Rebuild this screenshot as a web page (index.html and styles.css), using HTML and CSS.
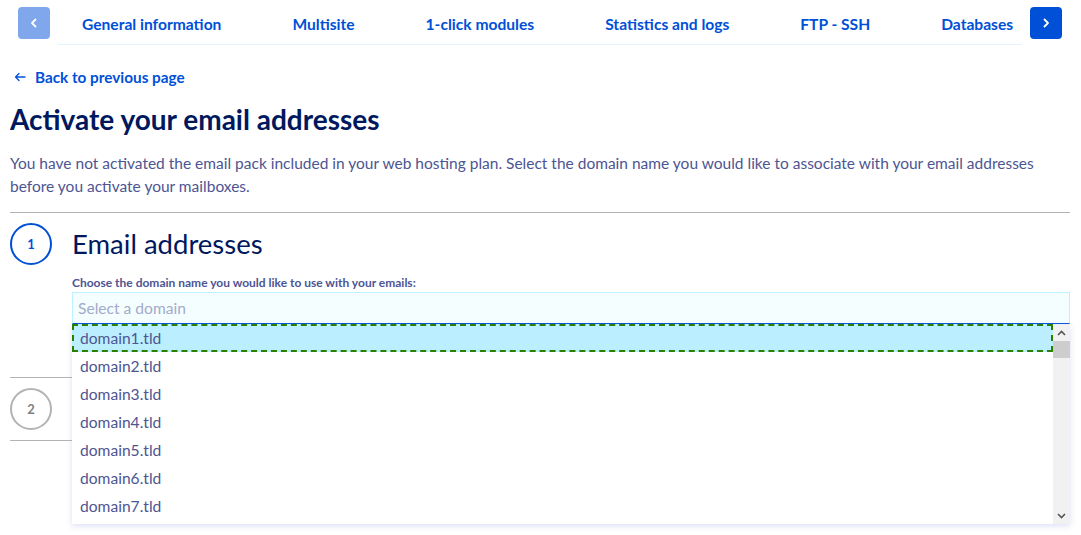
FILE: index.html
```html
<!DOCTYPE html>
<html lang="en">
<head>
<meta charset="utf-8">
<title>Activate your email addresses</title>
<link rel="stylesheet" href="styles.css">
</head>
<body>
<div class="tabs">
  <button class="nav-btn nav-btn--disabled" aria-label="Previous">
    <svg width="10" height="10" viewBox="0 0 10 10"><path d="M6.5 1.5 L3 5 L6.5 8.5" fill="none" stroke="#fff" stroke-width="1.8" stroke-linecap="round" stroke-linejoin="round"/></svg>
  </button>
  <nav class="tab-list">
    <a class="tab">General information</a>
    <a class="tab">Multisite</a>
    <a class="tab">1-click modules</a>
    <a class="tab">Statistics and logs</a>
    <a class="tab">FTP - SSH</a>
    <a class="tab">Databases</a>
  </nav>
  <button class="nav-btn" aria-label="Next">
    <svg width="10" height="10" viewBox="0 0 10 10"><path d="M3.5 1.5 L7 5 L3.5 8.5" fill="none" stroke="#fff" stroke-width="1.8" stroke-linecap="round" stroke-linejoin="round"/></svg>
  </button>
</div>

<main class="page">
  <a class="back-link">
    <svg class="back-arrow" width="12" height="10" viewBox="0 0 12 10"><path d="M11 5 H1.5 M5 1.5 L1.5 5 L5 8.5" fill="none" stroke="#0050d7" stroke-width="1.3" stroke-linecap="round" stroke-linejoin="round"/></svg>
    <span>Back to previous page</span>
  </a>
  <h1 class="title">Activate your email addresses</h1>
  <p class="intro">You have not activated the email pack included in your web hosting plan. Select the domain name you would like to associate with your email addresses before you activate your mailboxes.</p>

  <section class="step step--active">
    <div class="step-num">1</div>
    <div class="step-body">
      <h2 class="step-title">Email addresses</h2>
      <label class="field-label">Choose the domain name you would like to use with your emails:</label>
      <div class="select-wrap">
        <div class="select">Select a domain</div>
        <div class="dropdown">
          <ul class="options">
            <li class="option option--focus">domain1.tld</li>
            <li class="option">domain2.tld</li>
            <li class="option">domain3.tld</li>
            <li class="option">domain4.tld</li>
            <li class="option">domain5.tld</li>
            <li class="option">domain6.tld</li>
            <li class="option">domain7.tld</li>
          </ul>
          <div class="scrollbar">
            <div class="sb-arrow">
              <svg width="9" height="6" viewBox="0 0 9 6"><path d="M1 5 L4.5 1.5 L8 5" fill="none" stroke="#555" stroke-width="1.6"/></svg>
            </div>
            <div class="sb-track"><div class="sb-thumb"></div></div>
            <div class="sb-arrow">
              <svg width="9" height="6" viewBox="0 0 9 6"><path d="M1 1 L4.5 4.5 L8 1" fill="none" stroke="#555" stroke-width="1.6"/></svg>
            </div>
          </div>
        </div>
      </div>
    </div>
  </section>

  <section class="step step--pending">
    <div class="step-num">2</div>
    <div class="step-body"></div>
  </section>
</main>
</body>
</html>
```

FILE: styles.css
```css
* { box-sizing: border-box; }

html { height: 100%; }
body { min-height: 100%; }

body {
  margin: 0;
  background: #fff;
  font-family: Lato, "Open Sans", "Liberation Sans", sans-serif;
  color: #4d5592;
}

.tabs {
  display: flex;
  align-items: flex-start;
  gap: 8px;
  padding-left: 18px;
}

.nav-btn {
  flex: none;
  width: 32px;
  height: 32px;
  margin-top: 7px;
  border: none;
  border-radius: 4px;
  background: #0050d7;
  display: flex;
  align-items: center;
  justify-content: center;
  padding: 0;
}

.nav-btn--disabled { background: #80a7eb; }

.tab-list {
  width: 964px;
  height: 45px;
  display: flex;
  align-items: center;
  gap: 71px;
  padding: 3px 0 0 24px;
  border-bottom: 1px solid #e0f5ff;
  overflow: hidden;
  white-space: nowrap;
}

.tab {
  color: #0050d7;
  font-weight: 700;
  font-size: 15.6px;
}

.page { padding: 0 11px 0 10px; }

.back-link {
  display: flex;
  align-items: center;
  gap: 9px;
  margin-top: 22px;
  padding-left: 4px;
  color: #0050d7;
  font-weight: 700;
  font-size: 15.3px;
  height: 20px;
}

.title {
  margin: 14px 0 0;
  font-size: 28px;
  line-height: 36px;
  font-weight: 700;
  color: #00185e;
}

.intro {
  margin: 15px 0 0;
  font-size: 15.5px;
  line-height: 23px;
  padding-bottom: 14px;
  border-bottom: 1px solid #b3b3b3;
}

.step {
  display: flex;
  gap: 20px;
  padding: 10px 0 0;
}

.step-num {
  flex: none;
  width: 42px;
  height: 42px;
  border-radius: 50%;
  border: 2px solid #0050d7;
  color: #0050d7;
  font-weight: 700;
  font-size: 13px;
  display: flex;
  align-items: center;
  justify-content: center;
}

.step--active {
  height: 165px;
  border-bottom: 1px solid #b3b3b3;
}

.step--pending {
  height: 63px;
  border-bottom: 1px solid #b3b3b3;
}

.step--pending .step-num { border-color: #b3b3b3; color: #808080; }

.step-body { flex: 1; min-width: 0; }

.step-title {
  margin: 0;
  font-size: 27.5px;
  font-weight: 400;
  line-height: 42px;
  color: #00185e;
}

.field-label {
  display: block;
  margin-top: 11px;
  font-size: 12px;
  font-weight: 700;
  line-height: 14px;
  color: #4d5592;
}

.select-wrap { position: relative; margin-top: 2px; }

.select {
  height: 32px;
  background: #f5feff;
  border: 1px solid #bef1ff;
  border-bottom: 1px solid #0050d7;
  padding: 4px 5px 0;
  font-size: 15.6px;
  color: #a3aacc;
  line-height: 22px;
}

.dropdown {
  position: absolute;
  left: 0;
  right: 0;
  top: 32px;
  height: 200px;
  background: #fff;
  display: flex;
  box-shadow: 0 2px 6px rgba(160, 160, 230, 0.35);
  z-index: 5;
}

.options {
  flex: 1;
  margin: 0;
  padding: 0;
  list-style: none;
}

.option {
  height: 28px;
  line-height: 28px;
  padding-left: 8px;
  font-size: 15.6px;
  color: #4d5592;
}

.option--focus {
  background: #bbefff;
  outline: 2px dashed #2b8000;
  outline-offset: -2px;
}

.scrollbar {
  flex: none;
  width: 17px;
  background: #f1f1f1;
  display: flex;
  flex-direction: column;
}

.sb-arrow {
  height: 17px;
  display: flex;
  align-items: center;
  justify-content: center;
}

.sb-track { flex: 1; }

.sb-thumb {
  height: 17px;
  background: #cdcdcd;
}
```
